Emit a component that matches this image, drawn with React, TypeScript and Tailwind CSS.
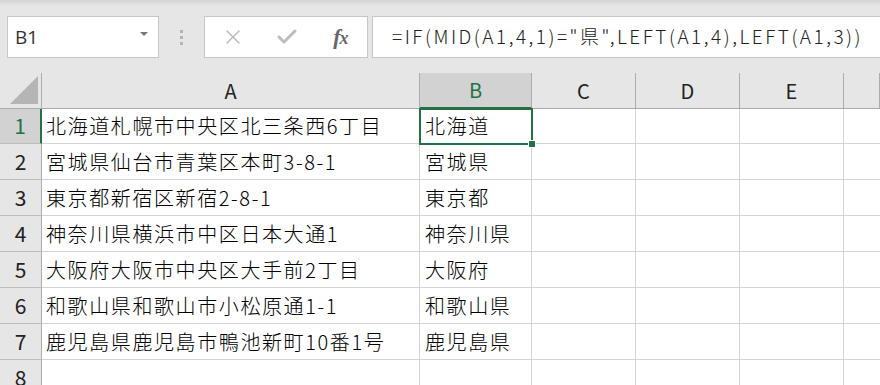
import { X, Check } from "lucide-react"

const rows = [
  ["北海道札幌市中央区北三条西6丁目", "北海道"],
  ["宮城県仙台市青葉区本町3-8-1", "宮城県"],
  ["東京都新宿区新宿2-8-1", "東京都"],
  ["神奈川県横浜市中区日本大通1", "神奈川県"],
  ["大阪府大阪市中央区大手前2丁目", "大阪府"],
  ["和歌山県和歌山市小松原通1-1", "和歌山県"],
  ["鹿児島県鹿児島市鴨池新町10番1号", "鹿児島県"],
  ["", ""],
]

const cols = ["A", "B", "C", "D", "E", ""]

const jp = "font-['Noto_Sans_CJK_JP','Noto_Sans',sans-serif]"

export default function App() {
  return (
    <div className={`w-[880px] h-[385px] overflow-hidden bg-white ${jp}`}>
      {/* formula bar */}
      <div className="h-[73px] bg-[#e6e6e6]">
        <div className="h-[6px] bg-gradient-to-b from-[#d4d4d4] to-[#e6e6e6]" />
        <div className="flex items-start pt-[10px]">
          <div className="ml-[7px] w-[152px] h-[42px] bg-white border border-[#c6c6c6] flex items-center justify-between pl-[7px] pr-[10px]">
            <span className="text-[19px] text-[#333] font-['Open_Sans',sans-serif]">B1</span>
            <span className="w-0 h-0 border-l-[4px] border-r-[4px] border-t-[4px] border-l-transparent border-r-transparent border-t-[#777] -mt-[6px]" />
          </div>
          <div className="w-[45px] h-[42px] flex flex-col items-center justify-center gap-[3px]">
            <span className="w-[3px] h-[3px] bg-[#b4b4b4]" />
            <span className="w-[3px] h-[3px] bg-[#b4b4b4]" />
            <span className="w-[3px] h-[3px] bg-[#b4b4b4]" />
          </div>
          <div className="w-[164px] h-[42px] bg-white border border-[#c6c6c6] flex items-center">
            <div className="w-[56px] flex justify-center">
              <X className="w-[24px] h-[24px] text-[#bdbdbd]" strokeWidth={1.5} />
            </div>
            <div className="w-[54px] flex justify-center">
              <Check className="w-[24px] h-[24px] text-[#bdbdbd]" strokeWidth={3} />
            </div>
            <div className="w-[54px] flex justify-center">
              <span className="font-['Liberation_Serif',serif] italic font-bold text-[22px] text-[#666] tracking-[-1px] leading-none">
                f<span className="text-[18px]">x</span>
              </span>
            </div>
          </div>
          <div className="ml-[4px] flex-1 h-[42px] bg-white border-y border-l border-[#c6c6c6] flex items-center pl-[19px]">
            <span className="text-[19px] font-light tracking-[2.5px] text-[#222] whitespace-nowrap -mt-[2px]">
              =IF(MID(A1,4,1)="県",LEFT(A1,4),LEFT(A1,3))
            </span>
          </div>
        </div>
      </div>

      {/* grid */}
      <div className="relative grid grid-cols-[42px_378px_112px_104px_104px_104px_36px]">
        {/* header row */}
        <div className="h-[36px] bg-[#e6e6e6] border-r border-b border-[#ababab] flex items-end justify-end pr-[3px] pb-[4px]">
          <svg width="28" height="28" viewBox="0 0 28 28">
            <polygon points="28,0 28,28 0,28" fill="#b5b5b5" />
          </svg>
        </div>
        {cols.map((c, i) => (
          <div
            key={i}
            className={
              c === "B"
                ? "h-[36px] bg-[#d2d2d2] border-r border-[#ababab] border-b-2 border-b-[#217346] flex items-center justify-center text-[20px] text-[#217346]"
                : "h-[36px] bg-[#e6e6e6] border-r border-b border-[#ababab] flex items-center justify-center text-[20px] text-[#222]"
            }
          >
            {c}
          </div>
        ))}

        {/* body rows */}
        {rows.map((r, i) => {
          const h = i === 0 ? "h-[35px]" : "h-[36px]"
          return (
            <div key={i} className="contents">
              <div
                className={
                  i === 0
                    ? "h-[35px] bg-[#d2d2d2] border-r-2 border-r-[#217346] border-b border-b-[#bdbdbd] flex items-center justify-center text-[21px] text-[#217346]"
                    : "h-[36px] bg-[#e6e6e6] border-r border-r-[#ababab] border-b border-b-[#bdbdbd] flex items-center justify-center text-[21px] text-[#222]"
                }
              >
                {i + 1}
              </div>
              <div className={`${h} border-r border-b border-[#d4d4d4] flex items-center pl-[4px] text-[20px] font-light tracking-[1.6px] text-[#000] whitespace-nowrap`}>
                {r[0]}
              </div>
              <div className={`${h} border-r border-b border-[#d4d4d4] flex items-center pl-[5px] text-[20px] font-light tracking-[1.6px] text-[#000] whitespace-nowrap`}>
                {r[1]}
              </div>
              <div className={`${h} border-r border-b border-[#d4d4d4]`} />
              <div className={`${h} border-r border-b border-[#d4d4d4]`} />
              <div className={`${h} border-r border-b border-[#d4d4d4]`} />
              <div className={`${h} border-b border-[#d4d4d4]`} />
            </div>
          )
        })}

        {/* selection */}
        <div className="absolute left-[419px] top-[35px] w-[114px] h-[37px] border-2 border-[#217346] pointer-events-none">
          <div className="absolute -right-[5px] -bottom-[5px] w-[8px] h-[8px] bg-[#217346] border border-white" />
        </div>
      </div>
    </div>
  )
}
